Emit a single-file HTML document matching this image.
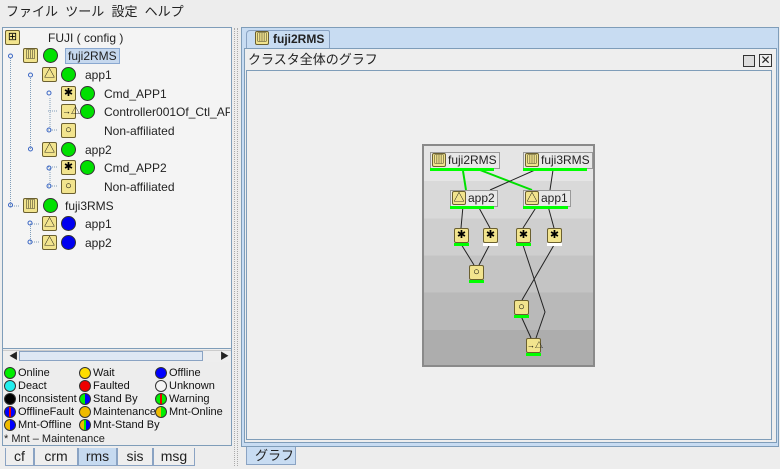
<!DOCTYPE html><html><head><meta charset="utf-8"><style>
*{margin:0;padding:0;box-sizing:border-box}
body{width:780px;height:469px;background:#ededed;font-family:"Liberation Sans","Noto Sans CJK JP",sans-serif;font-size:12px;color:#222;position:relative;overflow:hidden}
.a{position:absolute}
.t{position:absolute;font-size:12px;line-height:14px;white-space:nowrap}
.ic{position:absolute;width:15px;height:15px;background:#f2e48e;border:1px solid #6b6030;border-radius:2px;font-size:11px;line-height:13px;text-align:center;color:#000}
.c{position:absolute;width:15px;height:15px;border-radius:50%;border:1px solid #333}
.g{background:#00e000}.b{background:#0000f0}
.lg{position:absolute;font-size:11px;line-height:12px;white-space:nowrap;padding-left:14px;color:#111}
.lg i{position:absolute;left:0;top:0;width:12px;height:12px;border-radius:50%;border:1px solid #333}
.tab{position:absolute;top:448px;height:18px;border:1px solid #8aa3c3;border-top:none;font-size:14px;line-height:16px;text-align:center;background:#eee}
.n{position:absolute;height:17px;background:#e8e8e8;border:1px solid #999;font-size:12px;line-height:15px;padding-left:17px;padding-right:2px}
.n .ic{left:1px;top:0;width:14px;height:14px}
.bar{position:absolute;height:3px;background:#00ff00}
#tree{position:absolute;left:3px;top:28px;width:227px;height:320px;overflow:hidden}
#tree>*{margin-left:-3px;margin-top:-28px}
</style></head><body>
<div class="t" style="left:6px;top:5px;font-size:13px">ファイル&nbsp;&nbsp;ツール&nbsp;&nbsp;設定&nbsp;&nbsp;ヘルプ</div>
<div class="a" style="left:2px;top:27px;width:230px;height:322px;background:#f4f4f4;border:1px solid #7f9db9"></div>
<div class="a" style="left:2px;top:349px;width:230px;height:97px;border:1px solid #7f9db9;border-top:none"></div>
<div id="tree">
<svg class="a" style="left:0;top:28px" width="232" height="222">
<g stroke="#7f9db9" stroke-width="1" stroke-dasharray="1,1" fill="none">
<path d="M10.5 30V178M30.5 50V122M30.5 196V214M50 70V102M50 140V158M10 178h10M30 214h10M30 196h10"/>
<path d="M48 83h10M48 102h10M48 120h10M48 139h10M48 158h10"/>
</g>
<g fill="none" stroke="#3a66c4">
<circle cx="10.5" cy="28" r="2"/><circle cx="30.5" cy="47" r="2"/><circle cx="30.5" cy="121" r="2"/><circle cx="10.5" cy="177" r="2"/>
<circle cx="49" cy="65" r="2"/><circle cx="49" cy="102" r="2"/><circle cx="49" cy="140" r="2"/><circle cx="49" cy="158" r="2"/><circle cx="30" cy="195" r="2"/><circle cx="30" cy="214" r="2"/>
</g></svg>
<div class="ic" style="left:5px;top:30px">⊞</div><div class="t" style="left:48px;top:31px">FUJI ( config )</div>
<div class="ic" style="left:23px;top:48px">▥</div><div class="c g" style="left:43px;top:48px"></div><div class="t" style="left:65px;top:48px;background:#c6d8ee;border:1px solid #8aa8d0;padding:0 2px">fuji2RMS</div>
<div class="ic" style="left:42px;top:67px">△</div><div class="c g" style="left:61px;top:67px"></div><div class="t" style="left:85px;top:68px">app1</div>
<div class="ic" style="left:61px;top:86px">✱</div><div class="c g" style="left:80px;top:86px"></div><div class="t" style="left:104px;top:87px">Cmd_APP1</div>
<div class="ic" style="left:61px;top:104px;font-size:9px">→△</div><div class="c g" style="left:80px;top:104px"></div><div class="t" style="left:104px;top:105px">Controller001Of_Ctl_APP</div>
<div class="ic" style="left:61px;top:123px">○</div><div class="t" style="left:104px;top:124px">Non-affiliated</div>
<div class="ic" style="left:42px;top:142px">△</div><div class="c g" style="left:61px;top:142px"></div><div class="t" style="left:85px;top:143px">app2</div>
<div class="ic" style="left:61px;top:160px">✱</div><div class="c g" style="left:80px;top:160px"></div><div class="t" style="left:104px;top:161px">Cmd_APP2</div>
<div class="ic" style="left:61px;top:179px">○</div><div class="t" style="left:104px;top:180px">Non-affiliated</div>
<div class="ic" style="left:23px;top:198px">▥</div><div class="c g" style="left:43px;top:198px"></div><div class="t" style="left:65px;top:199px">fuji3RMS</div>
<div class="ic" style="left:42px;top:216px">△</div><div class="c b" style="left:61px;top:216px"></div><div class="t" style="left:85px;top:217px">app1</div>
<div class="ic" style="left:42px;top:235px">△</div><div class="c b" style="left:61px;top:235px"></div><div class="t" style="left:85px;top:236px">app2</div>
</div>
<div class="a" style="left:3px;top:350px;width:228px;height:12px;background:#eee;border-top:1px solid #ccc"></div>
<div class="a" style="left:19px;top:351px;width:184px;height:10px;background:#dfe8f4;border:1px solid #8aa3c3"></div>
<div class="t" style="left:9px;top:349px;font-size:9px">◀</div><div class="t" style="left:220px;top:349px;font-size:9px">▶</div>
<div class="lg" style="left:4px;top:367px"><i style="background:#0e0"></i>Online</div>
<div class="lg" style="left:79px;top:367px"><i style="background:#fd0"></i>Wait</div>
<div class="lg" style="left:155px;top:367px"><i style="background:#00f"></i>Offline</div>
<div class="lg" style="left:4px;top:380px"><i style="background:#2ee"></i>Deact</div>
<div class="lg" style="left:79px;top:380px"><i style="background:#e00"></i>Faulted</div>
<div class="lg" style="left:155px;top:380px"><i style="background:#f4f4f4"></i>Unknown</div>
<div class="lg" style="left:4px;top:393px"><i style="background:#000"></i>Inconsistent</div>
<div class="lg" style="left:79px;top:393px"><i style="background:linear-gradient(90deg,#0e0 50%,#00f 50%)"></i>Stand By</div>
<div class="lg" style="left:155px;top:393px"><i style="background:linear-gradient(90deg,#0e0 40%,#e00 40%,#e00 60%,#0e0 60%)"></i>Warning</div>
<div class="lg" style="left:4px;top:406px"><i style="background:linear-gradient(90deg,#00f 40%,#e00 40%,#e00 60%,#00f 60%)"></i>OfflineFault</div>
<div class="lg" style="left:79px;top:406px"><i style="background:#eb0"></i>Maintenance</div>
<div class="lg" style="left:155px;top:406px"><i style="background:linear-gradient(90deg,#eb0 50%,#0e0 50%)"></i>Mnt-Online</div>
<div class="lg" style="left:4px;top:419px"><i style="background:linear-gradient(90deg,#eb0 50%,#00f 50%)"></i>Mnt-Offline</div>
<div class="lg" style="left:79px;top:419px"><i style="background:linear-gradient(90deg,#eb0 40%,#0e0 40%,#0e0 60%,#00f 60%)"></i>Mnt-Stand By</div>
<div class="t" style="left:4px;top:432px;font-size:11px">* Mnt – Maintenance</div>
<div class="tab" style="left:5px;width:29px">cf</div>
<div class="tab" style="left:34px;width:44px">crm</div>
<div class="tab" style="left:78px;width:39px;background:#c6daf0">rms</div>
<div class="tab" style="left:117px;width:36px">sis</div>
<div class="tab" style="left:153px;width:42px">msg</div>
<div class="a" style="left:234px;top:28px;width:4px;height:438px;border-left:1px dotted #aaa;border-right:1px dotted #aaa"></div>
<div class="a" style="left:241px;top:27px;width:538px;height:420px;background:#c8dcf2;border:1px solid #7f9db9"></div>
<div class="a" style="left:246px;top:30px;width:84px;height:18px;background:#c8dcf2;border:1px solid #8aa3c3;border-bottom:none;border-radius:4px 2px 0 0"></div>
<div class="ic" style="left:255px;top:31px;width:14px;height:14px">▥</div>
<div class="t" style="left:273px;top:32px;font-weight:bold">fuji2RMS</div>
<div class="a" style="left:244px;top:48px;width:533px;height:395px;background:#eeeeee;border:1px solid #7f9db9"></div>
<div class="t" style="left:248px;top:53px;font-size:13px">クラスタ全体のグラフ</div>
<div class="a" style="left:743px;top:55px;width:12px;height:12px;border:1px solid #333;background:#ddd"></div>
<div class="a" style="left:759px;top:54px;width:13px;height:13px;border:1px solid #333;font-size:12px;line-height:11px;text-align:center">✕</div>
<div class="a" style="left:246px;top:70px;width:526px;height:370px;border:1px solid #7f9db9;background:#efefef"></div>
<div class="a" style="left:422px;top:144px;width:173px;height:223px;border:2px solid #8a8a8a;background:linear-gradient(#e5e5e5 0,#e5e5e5 16%,#d9d9d9 16%,#d9d9d9 33%,#cfcfcf 33%,#cfcfcf 50%,#c4c4c4 50%,#c4c4c4 67%,#b9b9b9 67%,#b9b9b9 84%,#adadad 84%)"></div>
<svg class="a" style="left:0;top:0" width="780" height="469">
<g stroke="#00e000" stroke-width="2"><path d="M463 171L466 190M480 170L532 190"/></g>
<g stroke="#222" stroke-width="1" fill="none">
<path d="M535 170L490 190M553 170L550 190M463 206L461 228M478 206L490 228M461 244L474 265M490 244L479 265M537 206L523 228M548 206L554 228M523 245L545 312L536 338M554 245L522 300M521 316L531 338"/></g></svg>
<div class="n" style="left:430px;top:152px"><div class="ic">▥</div>fuji2RMS</div><div class="bar" style="left:430px;top:168px;width:64px"></div>
<div class="n" style="left:523px;top:152px"><div class="ic">▥</div>fuji3RMS</div><div class="bar" style="left:523px;top:168px;width:64px"></div>
<div class="n" style="left:450px;top:190px"><div class="ic">△</div>app2</div><div class="bar" style="left:450px;top:206px;width:44px"></div>
<div class="n" style="left:523px;top:190px"><div class="ic">△</div>app1</div><div class="bar" style="left:523px;top:206px;width:45px"></div>
<div class="ic" style="left:454px;top:228px">✱</div><div class="bar" style="left:454px;top:243px;width:15px"></div>
<div class="ic" style="left:483px;top:228px">✱</div><div class="bar" style="left:483px;top:243px;width:15px;background:#fff"></div>
<div class="ic" style="left:516px;top:228px">✱</div><div class="bar" style="left:516px;top:243px;width:15px"></div>
<div class="ic" style="left:547px;top:228px">✱</div><div class="bar" style="left:547px;top:243px;width:15px;background:#fff"></div>
<div class="ic" style="left:469px;top:265px">○</div><div class="bar" style="left:469px;top:280px;width:15px"></div>
<div class="ic" style="left:514px;top:300px">○</div><div class="bar" style="left:514px;top:315px;width:15px"></div>
<div class="ic" style="left:526px;top:338px;font-size:8px">→△</div><div class="bar" style="left:526px;top:353px;width:15px"></div>
<div class="a" style="left:244px;top:446px;width:532px;height:1px;background:#7f9db9"></div>
<div class="a" style="left:246px;top:447px;width:50px;height:18px;background:#c8dcf2;border:1px solid #8aa3c3;border-top:none"></div>
<div class="t" style="left:255px;top:449px;font-size:13px">グラフ</div>
</body></html>
